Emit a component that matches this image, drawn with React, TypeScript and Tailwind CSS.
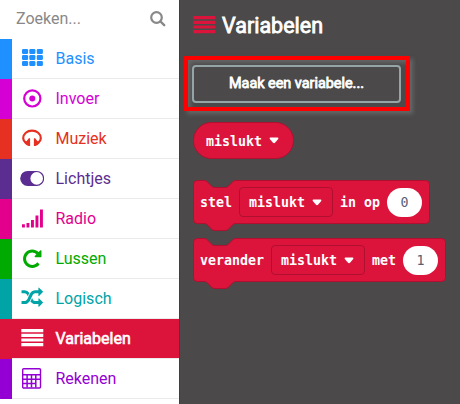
import React from "react";

const rows = [
  { name: "Basis", bar: "bg-[#1e90ff]", text: "text-[#1e90ff]", icon: "grid" },
  { name: "Invoer", bar: "bg-[#d400d4]", text: "text-[#d400d4]", icon: "target" },
  { name: "Muziek", bar: "bg-[#e63022]", text: "text-[#e63022]", icon: "headphones" },
  { name: "Lichtjes", bar: "bg-[#5c2d91]", text: "text-[#5c2d91]", icon: "toggle" },
  { name: "Radio", bar: "bg-[#e3008c]", text: "text-[#e3008c]", icon: "signal" },
  { name: "Lussen", bar: "bg-[#00aa00]", text: "text-[#00aa00]", icon: "repeat" },
  { name: "Logisch", bar: "bg-[#00a4a6]", text: "text-[#00a4a6]", icon: "random" },
  { name: "Variabelen", bar: "bg-[#dc143c]", text: "text-white", icon: "lines", active: true },
  { name: "Rekenen", bar: "bg-[#9400d3]", text: "text-[#9400d3]", icon: "calc" },
];

// All icons share a 24x24 canvas.
function Icon({ name }: { name: string }) {
  return (
    <svg width="24" height="24" viewBox="0 0 24 24" fill="currentColor" className="mb-px shrink-0">
      {name === "grid" &&
        [3, 9, 15].map((y) =>
          [2, 9.3, 16.8].map((x) => <rect key={`${x}-${y}`} x={x} y={y} width="6.1" height="5" rx="1.2" />)
        )}
      {name === "target" && (
        <>
          <circle cx="12.3" cy="12.4" r="8.100" fill="none" stroke="currentColor" strokeWidth="2.2" />
          <circle cx="12.3" cy="12.4" r="3" />
        </>
      )}
      {name === "headphones" && (
        <>
          <path d="M5.500 16.300C4 15.200 3.200 13.900 3.200 12.300C3.200 7.700 7.200 4.600 12 4.600S20.800 7.700 20.800 12.300C20.800 13.900 20 15.200 18.500 16.300" fill="none" stroke="currentColor" strokeWidth="2.2" />
          <path d="M10.100 12.300V20H8.600Q4.600 18.800 4.200 15.800Q7.500 15.300 8.800 12.300ZM13.900 12.300V20H15.400Q19.400 18.800 19.800 15.800Q16.500 15.300 15.200 12.300Z" />
        </>
      )}
      {name === "toggle" && (
        <>
          <rect x="0.2" y="4.900" width="24" height="15" rx="7.500" />
          <circle cx="16.700" cy="12.400" r="6.300" fill="white" />
        </>
      )}
      {name === "signal" && (
        <path d="M2 18.3h2.900v3.200H2zM6.500 17h2.900v4.500H6.500zM11 14h2.900v7.500H11zM15.500 9.500h2.900v12h-2.900zM20 3.500h2.900v18H20z" />
      )}
      {name === "repeat" && (
        <g transform="translate(1.5 2) scale(.012)">
          <path d="M1664 256v448q0 26-19 45t-45 19h-448q-42 0-59-40-17-39 14-69l138-138q-148-137-349-137-104 0-198.5 40.5t-163.5 109.5-109.5 163.5-40.5 198.5 40.5 198.5 109.5 163.5 163.5 109.5 198.5 40.5q119 0 225-52t179-147q7-10 23-12 15 0 25 9l137 138q9 8 9.5 20.5t-7.5 22.5q-109 132-264 204.5t-327 72.5q-156 0-298-61t-245-164-164-245-61-298 61-298 164-245 245-164 298-61q147 0 284.5 55.5t244.5 156.5l130-129q29-31 70-14 39 17 39 59z" />
        </g>
      )}
      {name === "random" && (
        <g transform="translate(1.5 1.2) scale(.012)">
          <path d="M666 481q-60 92-137 273-22-45-37-72.5t-40.5-63.5-51-56.5-63-35-81.5-14.5h-224q-14 0-23-9t-9-23v-192q0-14 9-23t23-9h224q250 0 410 225zm1126 799q0 14-9 23l-320 320q-9 9-23 9-13 0-22.5-9.5t-9.5-22.5v-192q-32 0-85 .5t-81 1-73-1-71-5-64-10.5-63-18.5-58-28.5-59-40-55-53.5-56-69.5q59-93 136-273 22 45 37 72.5t40.5 63.5 51 56.5 63 35 81.5 14.5h256v-192q0-14 9-23t23-9q12 0 24 10l319 319q9 9 9 23zm0-896q0 14-9 23l-320 320q-9 9-23 9-13 0-22.5-9.5t-9.5-22.5v-192h-256q-48 0-87 15t-69 45-51 61.5-45 77.5q-32 62-78 171-29 66-49.5 111t-54 105-64 100-74 83-90 68.5-106.5 42-128 16.5h-224q-14 0-23-9t-9-23v-192q0-14 9-23t23-9h224q48 0 87-15t69-45 51-61.5 45-77.5q32-62 78-171 29-66 49.5-111t54-105 64-100 74-83 90-68.5 106.5-42 128-16.5h256v-192q0-14 9-23t23-9q12 0 24 10l319 319q9 9 9 23z" />
        </g>
      )}
      {name === "lines" && <path d="M1.300 3.100h22v3.200h-22zM1.300 7.800h22v3.200h-22zM1.300 12.400h22v3.200h-22zM1.300 17h22v3.200h-22z" />}
      {name === "calc" && (
        <>
          <rect x="2.700" y="2.700" width="17.800" height="19.300" rx="1" fill="none" stroke="currentColor" strokeWidth="1.400" />
          <path d="M2.700 8.700h18M2.700 13.300h17.500M2.700 17.600h13M7.100 9v12.500M11.500 9v12.500M15.800 9v12.500" fill="none" stroke="currentColor" strokeWidth="1.500" />
        </>
      )}
    </svg>
  );
}

function Caret() {
  return (
    <svg width="10" height="7" viewBox="0 0 10 7" className="shrink-0">
      <path d="M1.3.5h7.400q1.200.3.500 1.400L6 5.700q-1 .9-2 0L.8 1.900Q.1.8 1.3.5z" fill="white" />
    </svg>
  );
}

function Dropdown() {
  return (
    <span className="flex h-[30px] grow items-center gap-[7px] rounded-[4px] border border-[#b01030] pl-[9px]">
      <span className="pt-[2px]">mislukt</span> <Caret />
    </span>
  );
}

function Block({ width, className, children }: { width: number; className: string; children: React.ReactNode }) {
  return (
    <div className={`relative isolate flex h-[44px] items-center ${className}`}>
      <svg className="absolute left-0 top-0 -z-10 overflow-visible" width={width} height="52">
        <path
          d={`M.5 4.5a4 4 0 0 1 4-4H11c2 0 3 .8 4 2l3.5 3.6c1 1 2 1.4 3.5 1.4h10c1.500 0 2.500-.4 3.500-1.400L39 2.500c1-1.200 2-2 4-2H${width - 4.5}a4 4 0 0 1 4 4V39.500a4 4 0 0 1-4 4H43c-2 0-3 .8-4 2l-3.500 3.600c-1 1-2 1.400-3.500 1.400H22c-1.500 0-2.500-.4-3.500-1.400L15 45.500c-1-1.200-2-2-4-2H4.500a4 4 0 0 1-4-4z`}
          fill="#dc143c"
          stroke="#b01030"
        />
      </svg>
      {children}
    </div>
  );
}

export default function App() {
  return (
    <div className="flex h-[404px] w-[460px] overflow-hidden bg-[#4b4949] font-['Roboto',sans-serif]">
      <aside className="flex w-[179px] shrink-0 flex-col bg-white">
        <div className="flex h-[39px] items-center pr-[13px] pl-4 text-[16px] text-[#888]">
          <span className="mb-[1px] grow">Zoeken...</span>
          <svg width="16" height="16" viewBox="0 0 16 16" fill="none" stroke="currentColor" className="mb-[2px]">
            <circle cx="6.500" cy="6.500" r="5.300" strokeWidth="2.200" />
            <path d="M10.500 10.500l3.700 3.700" strokeWidth="2.400" strokeLinecap="round" />
          </svg>
        </div>
        {rows.map((r) => (
          <div key={r.name} className="flex h-10">
            <div className={`w-3 ${r.bar}`} />
            <div className={`flex grow items-center gap-[11.500px] border-b border-[#ebebeb] pl-2 text-[16px] ${r.text} ${r.active ? "bg-[#dc143c] [-webkit-text-stroke:0.6px_white]" : ""}`}>
              <Icon name={r.icon} />
              <span>{r.name}</span>
            </div>
          </div>
        ))}
      </aside>
      <main className="flex grow flex-col items-start border-l border-[#3f3d3d]">
        <h1 className="mt-[10px] ml-[12px] flex h-[30px] items-center gap-[6px] text-[21.500px] text-white">
          <span className="text-[#dc143c]"><Icon name="lines" /></span>
          <span className="pt-[2px] [-webkit-text-stroke:0.8px_white]">Variabelen</span>
        </h1>
        <div className="mt-[16px] ml-[4px] flex h-[55px] w-[226px] items-center justify-center border-4 border-[#ff0000] shadow-[3px_3px_4px_#666,inset_3px_3px_4px_#666]">
          <button className="mr-px h-[38px] w-[209px] rounded-[4px] border-2 border-[#95a5a6] bg-[#4b4949] text-[14.400px] text-white [-webkit-text-stroke:0.8px_white]">Maak een variabele...</button>
        </div>
        <div className="ml-[13px] flex flex-col items-start font-['DejaVu_Sans_Mono',monospace] text-[13.300px] font-bold text-white">
          <div className="mt-[11px] flex h-[37px] w-[101px] items-center gap-[7px] rounded-full border border-[#b01030] bg-[#dc143c] pl-[12px]">
            <span className="pt-[2px]">mislukt</span> <Caret />
          </div>
          <Block width={237} className="mt-[21px] w-[237px]">
            <span className="ml-[7px] w-[39px] pt-[2px]">stel</span>
            <span className="flex w-[94px]"><Dropdown /></span>
            <span className="ml-[7px] w-[47px] pt-[2px] whitespace-nowrap">in op</span>
            <span className="flex h-[29px] w-[35px] items-center justify-center rounded-full bg-white pt-[2px] font-normal text-[#575e75]">0</span>
          </Block>
          <Block width={253} className="mt-[14px] w-[253px]">
            <span className="ml-[7px] w-[71px] pt-[2px]">verander</span>
            <span className="flex w-[94px]"><Dropdown /></span>
            <span className="ml-[7px] w-[31px] pt-[2px]">met</span>
            <span className="flex h-[29px] w-[35px] items-center justify-center rounded-full bg-white pt-[2px] font-normal text-[#575e75]">1</span>
          </Block>
        </div>
      </main>
    </div>
  );
}
